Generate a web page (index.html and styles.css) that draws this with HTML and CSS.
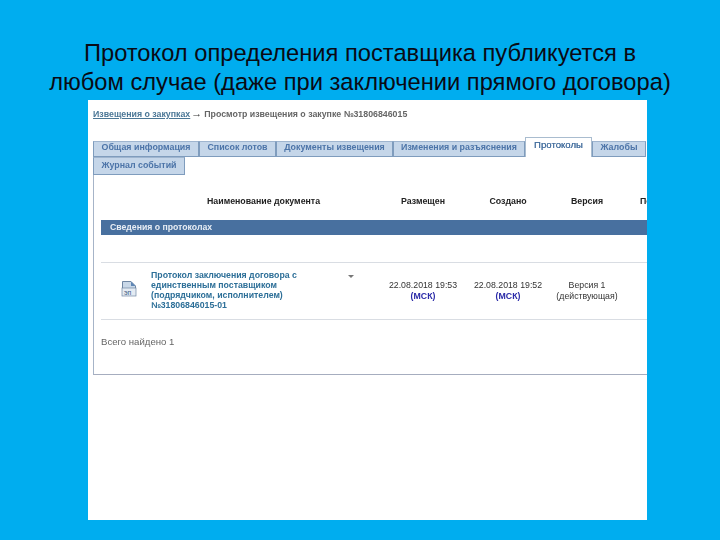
FILE: index.html
```html
<!DOCTYPE html>
<html lang="ru">
<head>
    <meta charset="UTF-8">
    <title>Протокол определения поставщика</title>
    <link rel="stylesheet" href="styles.css">
</head>
<body>
    <div class="slide">
        <h1 class="slide-title">Протокол определения поставщика публикуется в<br>любом случае (даже при заключении прямого договора)</h1>

        <div class="shot">
            <div class="crumbs">
                <a class="crumb-link">Извещения о закупках</a>
                <span class="crumb-arrow">→</span>
                <span>Просмотр извещения о закупке №31806846015</span>
            </div>

            <div class="tabs">
                <div class="tab tab-general">Общая информация</div>
                <div class="tab tab-lots">Список лотов</div>
                <div class="tab tab-docs">Документы извещения</div>
                <div class="tab tab-changes">Изменения и разъяснения</div>
                <div class="tab tab-active">Протоколы</div>
                <div class="tab tab-complaints">Жалобы</div>
                <div class="tab tab-journal">Журнал событий</div>
            </div>

            <div class="panel">
                <div class="table-row table-head">
                    <div></div>
                    <div class="head-name">Наименование документа</div>
                    <div class="cell-center">Размещен</div>
                    <div class="cell-center">Создано</div>
                    <div class="cell-center">Версия</div>
                    <div class="head-last">Подпись</div>
                </div>

                <div class="section-bar">Сведения о протоколах</div>

                <div class="table-row doc-row">
                    <div class="doc-icon">
                        <svg width="16" height="17" viewBox="0 0 16 17">
                            <path d="M1.5 1.5H10L14.5 6V15.5H1.5Z" fill="#c9d8e8" stroke="#6f86a3"/>
                            <path d="M10 1.5V6H14.5Z" fill="#5f86b5"/>
                            <rect x="1" y="8" width="14" height="8" fill="#e4ebf3" stroke="#6f86a3" stroke-width="0.7"/>
                            <text x="3" y="14.5" class="doc-icon-text">эп</text>
                        </svg>
                    </div>
                    <div class="doc-name">
                        <a class="doc-link">Протокол заключения договора с единственным поставщиком (подрядчиком, исполнителем) №31806846015-01</a>
                        <span class="doc-caret"></span>
                    </div>
                    <div class="cell-center doc-meta">22.08.2018 19:53<br><b class="tz">(МСК)</b></div>
                    <div class="cell-center doc-meta">22.08.2018 19:52<br><b class="tz">(МСК)</b></div>
                    <div class="cell-center doc-meta">Версия 1<br>(действующая)</div>
                    <div></div>
                </div>

                <div class="total">Всего найдено 1</div>
            </div>
        </div>
    </div>
</body>
</html>
```

FILE: styles.css
```css
* {
    box-sizing: border-box;
}

body {
    margin: 0;
    font-family: "Liberation Sans", Arial, sans-serif;
}

.slide {
    width: 720px;
    height: 540px;
    background-color: #00adef;
    padding-top: 39px;
    overflow: hidden;
}

.slide-title {
    margin: 0;
    height: 61px;
    font-size: 23.7px;
    line-height: 29px;
    font-weight: normal;
    text-align: center;
    color: #0a0a14;
    white-space: nowrap;
}

.shot {
    width: 559px;
    height: 420px;
    margin-left: 88px;
    padding: 6px 0 0 5px;
    background-color: #fff;
    overflow: hidden;
    font-size: 9px;
    color: #333;
}

.crumbs,
.tabs,
.panel {
    filter: blur(0.3px);
}

.crumbs {
    display: flex;
    align-items: center;
    gap: 2px;
    height: 16px;
    font-weight: bold;
    font-size: 8.8px;
    color: #666;
    white-space: nowrap;
}

.crumb-link {
    color: #4b7796;
    text-decoration: underline;
}

.crumb-arrow {
    margin: -3px 0 0 -1px;
    color: #333;
    font-size: 11px;
}

.tabs {
    display: flex;
    flex-wrap: wrap;
    width: 554px;
    margin-top: 15px;
    padding-top: 4px;
}

.tab {
    height: 16px;
    text-align: center;
    font-size: 8.85px;
    font-weight: bold;
    color: #4c74a8;
    background-color: #c5d6e9;
    border: 1px solid #7f9cbd;
    border-top-color: #9fb5cf;
    white-space: nowrap;
}

.tab-general { width: 106px; }
.tab-lots { width: 77px; }
.tab-docs { width: 117px; }
.tab-changes { width: 132px; }
.tab-complaints { width: 54px; }

.tab-active {
    width: 67px;
    height: 20px;
    margin-top: -4px;
    padding-top: 1px;
    font-weight: normal;
    color: #46709f;
    background-color: #fff;
    border-color: #a9bccf;
    border-bottom: none;
    font-size: 9.6px;
    text-shadow: 0 0 0.4px #46709f;
}

.tab-journal {
    width: 92px;
    height: 18px;
    padding-top: 2px;
}

.panel {
    width: 570px;
    height: 200px;
    padding-left: 7px;
    border: 1px solid #a6adbf;
    border-top: none;
    border-left: 1px solid #a6b4c8;
}

.table-row {
    display: grid;
    grid-template-columns: 50px 230px 84px 86px 72px 60px;
}

.table-head {
    align-items: center;
    height: 45px;
    padding-top: 6px;
    font-weight: bold;
    font-size: 8.8px;
    color: #222;
}

.head-name {
    padding-left: 56px;
}

.head-last {
    padding-left: 17px;
}

.cell-center {
    text-align: center;
}

.section-bar {
    width: 546px;
    height: 15px;
    padding-left: 9px;
    background-color: #48709f;
    color: #e8eef5;
    font-weight: bold;
    font-size: 8.7px;
    line-height: 15px;
}

.doc-row {
    height: 58px;
    margin-top: 27px;
    padding-top: 7px;
    width: 546px;
    border-top: 1px solid #d9dde3;
    border-bottom: 1px solid #d9dde3;
    line-height: 10px;
    font-size: 8.75px;
}

.doc-meta {
    padding-top: 10px;
    line-height: 11px;
}

.doc-icon {
    padding: 10px 0 0 20px;
}

.doc-icon-text {
    font-size: 7px;
    fill: #3f5f85;
    font-family: "Liberation Sans", Arial, sans-serif;
}

.doc-name {
    display: flex;
}

.doc-link {
    width: 156px;
    font-weight: bold;
    color: #2d6f98;
}

.doc-caret {
    width: 0;
    height: 0;
    margin: 5px 0 0 41px;
    border-left: 3px solid transparent;
    border-right: 3px solid transparent;
    border-top: 3px solid #777;
}

.tz {
    color: #2a2aa8;
}

.total {
    margin-top: 16px;
    color: #666;
    font-size: 9.6px;
}
```
